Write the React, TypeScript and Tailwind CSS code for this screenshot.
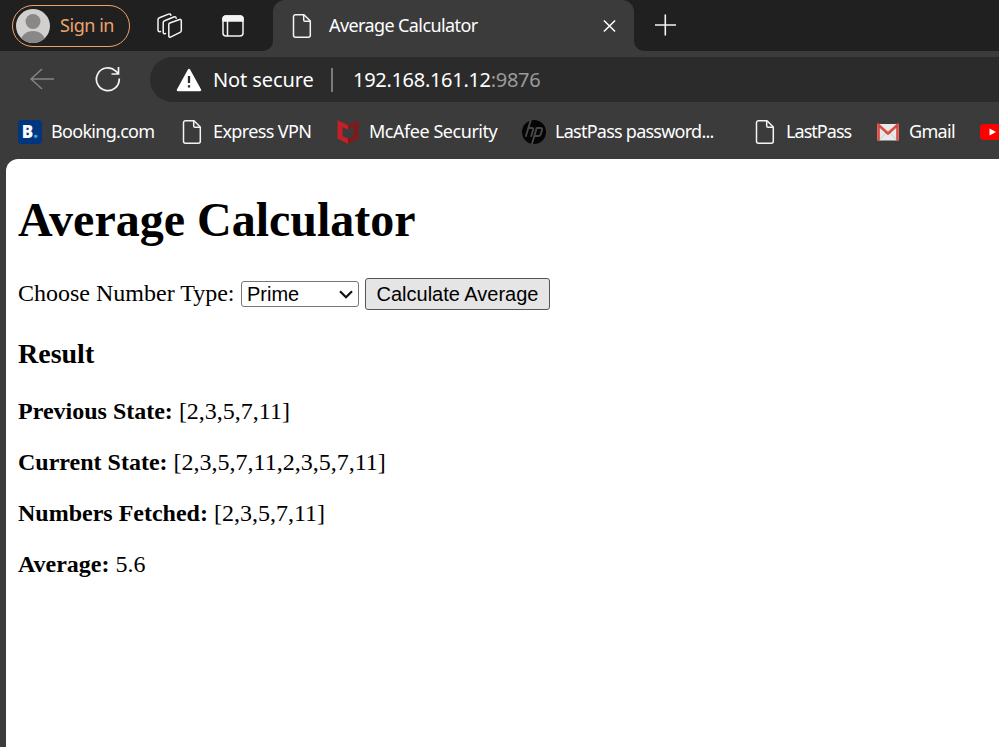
import React from "react";

function PageIcon() {
  return (
    <svg className="block shrink-0" width="20" height="26" viewBox="0 0 20 26" fill="none" stroke="#f4f4f4" strokeWidth="1.5" strokeLinejoin="round">
      <path d="M3.5 1.7H12L18.3 8V22.2a2 2 0 0 1-2 2H3.5a2 2 0 0 1-2-2V3.7a2 2 0 0 1 2-2Z" />
      <path d="M11.7 2V7a1.3 1.3 0 0 0 1.3 1.3h5" />
    </svg>
  );
}

function SignIn() {
  return (
    <div className="ml-[12px] flex h-[42px] w-[118px] shrink-0 items-center rounded-full border-[1.5px] border-[#f0a368] pl-[3px]">
      <svg className="block shrink-0" width="34" height="34" viewBox="0 0 34 34">
        <defs>
          <clipPath id="avatar"><circle cx="17" cy="17" r="17" /></clipPath>
        </defs>
        <g clipPath="url(#avatar)">
          <rect width="34" height="34" fill="#d2d0ce" />
          <circle cx="17" cy="12.5" r="7.5" fill="#8a8886" />
          <ellipse cx="17" cy="33" rx="12.5" ry="11" fill="#8a8886" />
        </g>
      </svg>
      <span className="ml-[10px] whitespace-nowrap text-[18px] tracking-[-0.45px] text-[#eda46c]">Sign in</span>
    </div>
  );
}

function TabStrip() {
  return (
    <div className="flex h-[51px] bg-[#3b3b3b]">
      <div className="flex w-[273px] shrink-0 items-center rounded-br-[10px] bg-[#202020]">
        <SignIn />
        <svg className="ml-[27px] block shrink-0" width="26" height="26" viewBox="0 0 26 26" fill="none" stroke="#f4f4f4" strokeWidth="1.5" strokeLinejoin="round" strokeLinecap="round">
          <path d="M12.800 10 22.600 6.500a1.200 1.200 0 0 1 1.700 1.100V17.600a2 2 0 0 1-1.200 1.800l-9.600 4.700a1.200 1.200 0 0 1-1.700-1.100V11.500a1.600 1.600 0 0 1 1-1.500Z" />
          <path d="M8.500 20.500c-1.500.6-2.300.1-2.300-1.200V9.700c0-1 .5-1.700 1.400-2L16.800 4c1.300-.5 2.200-.1 2.400 1.200" />
          <path d="M3.500 18.600C1.900 19 1 18.400 1 17V6.800c0-1 .5-1.700 1.400-2L11.500 1.100c1.300-.5 2.200-.1 2.400 1.200" />
        </svg>
        <svg className="ml-[38.5px] block shrink-0" width="22" height="22" viewBox="0 0 22 22" fill="none" stroke="#f4f4f4" strokeWidth="1.5">
          <rect x="1" y="1" width="20" height="20" rx="3" />
          <path d="M1 6V4a3 3 0 0 1 3-3h14a3 3 0 0 1 3 3v2Z" fill="#f4f4f4" />
          <path d="M5.500 6v15" />
        </svg>
      </div>
      <div className="w-[361px] shrink-0 bg-[#202020]">
        <div className="flex h-[51px] items-center rounded-t-[12px] bg-[#3b3b3b] pl-[19px]">
          <PageIcon />
          <span className="ml-[17px] w-[274px] whitespace-nowrap text-[18px] tracking-[-0.6px] text-white">Average Calculator</span>
          <svg className="block shrink-0" width="13" height="14" viewBox="0 0 14 14" stroke="#fff" strokeWidth="1.600">
            <path d="M1 1 13 13M13 1 1 13" />
          </svg>
        </div>
      </div>
      <div className="flex grow items-center rounded-bl-[10px] bg-[#202020] pb-[2px] pl-[20px]">
        <svg className="block shrink-0" width="24" height="24" viewBox="0 0 24 24" stroke="#f4f4f4" strokeWidth="1.600">
          <path d="M1 12h21M11.300 1.500v21" />
        </svg>
      </div>
    </div>
  );
}

function Toolbar() {
  return (
    <div className="flex h-[57px] items-center bg-[#3b3b3b]">
      <svg className="mb-[2px] ml-[29px] block shrink-0" width="26" height="24" viewBox="0 0 26 24" fill="none" stroke="#858585" strokeWidth="1.400">
        <path d="M13 2 2 12l11 10M2 12h23" />
      </svg>
      <svg className="mb-[1px] ml-[40px] block shrink-0" width="26" height="26" viewBox="0 0 26 26" fill="none" stroke="#f4f4f4" strokeWidth="1.700">
        <path d="M24.200 12.500A11.400 11.400 0 1 1 20.500 4.800L23.300 7.500M23.500 1v7h-7" />
      </svg>
      <div className="ml-[29px] flex h-[45px] grow items-center rounded-l-full bg-[#2b2b2b] pl-[26px] text-[20px]">
        <svg className="block shrink-0" width="26" height="24" viewBox="0 0 26 24">
          <path d="M13 2 24 22H2Z" fill="#fff" stroke="#fff" strokeWidth="2.500" strokeLinejoin="round" />
          <path d="M13 8v7M13 17.200v2.300" stroke="#2b2b2b" strokeWidth="2.300" />
        </svg>
        <span className="ml-[11px] w-[118px] whitespace-nowrap tracking-[-0.1px] text-white">Not secure</span>
        <div className="h-[24px] w-[2px] shrink-0 bg-[#7c7c7c]" />
        <span className="ml-[20px] whitespace-nowrap tracking-[-0.3px] text-[#9a9a9a]"><span className="text-white">192.168.161.12</span>:9876</span>
      </div>
    </div>
  );
}

function BookmarkBar() {
  return (
    <div className="flex h-[51px] items-center overflow-hidden whitespace-nowrap bg-[#3b3b3b] pb-[4px] text-[18px] text-white">
      <div className="ml-[18px] flex w-[164px] shrink-0 items-center gap-[9px]">
        <span className="flex h-[24px] w-[24px] shrink-0 items-center justify-center rounded-[4px] bg-[#003580] font-['Open_Sans'] text-[17px] font-extrabold leading-none">B<span className="text-[#35a3e8]">.</span></span>
        <span className="tracking-[-0.7px]">Booking.com</span>
      </div>
      <div className="flex w-[154px] shrink-0 items-center gap-[11px]"><PageIcon /><span className="tracking-[-0.62px]">Express VPN</span></div>
      <div className="flex w-[186px] shrink-0 items-center gap-[9px]">
        <svg className="block shrink-0" width="24" height="24" viewBox="0 0 24 24">
          <path d="M1.500 0 12 5.300v4.400L6.500 7v9l5.500 2.800V24L1.500 18.500Z" fill="#c4202a" />
          <path d="M22.500 0 12 5.300v4.400L17.500 7v9L12 18.800V24l10.500-5.500Z" fill="#7c1b1a" />
        </svg>
        <span className="tracking-[-0.46px]">McAfee Security</span>
      </div>
      <div className="flex w-[233px] shrink-0 items-center gap-[9px]">
        <svg className="block shrink-0" width="24" height="24" viewBox="0 0 24 24" fill="none" stroke="#484848" strokeWidth="1.900">
          <circle cx="12" cy="12" r="12" fill="#050505" stroke="none" />
          <path d="M8.800 0 3.700 16.800M6.700 8h3q2 0 1.400 2L9 16.800M14.800 7.500 10 24M14.600 8h4q2 0 1.400 2l-1.400 4.500q-.5 1.500-2.400 1.500h-3.500" />
        </svg>
        <span className="tracking-[-0.75px]">LastPass password...</span>
      </div>
      <div className="flex w-[121px] shrink-0 items-center gap-[11px]"><PageIcon /><span className="tracking-[-0.95px]">LastPass</span></div>
      <div className="flex w-[104px] shrink-0 items-center gap-[9px]">
        <svg className="block shrink-0" width="24" height="18" viewBox="0 0 24 18">
          <rect x="1" y="1" width="22" height="16.500" rx="1.500" fill="#e8e8e8" />
          <path d="m3 17 7-7M21 17l-7-7" stroke="#ccc" />
          <path d="M2.500 17.500V2L12 10.500 21.500 2v15.500" fill="none" stroke="#d94a42" strokeWidth="2.600" />
        </svg>
        <span className="tracking-[-0.7px]">Gmail</span>
      </div>
      <svg className="block shrink-0" width="24" height="18" viewBox="0 0 24 18">
        <rect y="1" width="24" height="16" rx="4" fill="#f00" /><path d="m9.500 5.500 6.500 3.500-6.500 3.500Z" fill="#fff" />
      </svg>
    </div>
  );
}

function State({ label, value }: { label: string; value: string }) {
  return <p className="mb-[24px] leading-[27px]"><b>{label}</b> {value}</p>;
}

export default function App() {
  return (
    <div className="h-[747px] w-[999px] overflow-hidden bg-[#3b3b3b] font-['Noto_Sans',sans-serif]">
      <TabStrip />
      <Toolbar />
      <BookmarkBar />
      <main className="ml-[6px] h-[588px] rounded-tl-[12px] bg-white pl-[12px] pt-[33px] font-['Liberation_Serif',serif] text-[24px] text-black">
        <h1 className="text-[48px] font-bold leading-[55px]">Average Calculator</h1>
        <div className="mt-[31px] flex h-[32px] items-center leading-[27px]">
          <label className="w-[223px] shrink-0 whitespace-nowrap pb-[2px]">Choose Number Type:</label>
          <div className="flex h-[26px] w-[118px] shrink-0 items-center justify-between rounded-[3px] border border-[#767676] bg-white pl-[5px] pr-[5px] font-['Liberation_Sans',sans-serif] text-[20px]">
            <span>Prime</span>
            <svg width="14" height="9" viewBox="0 0 14 9" fill="none" stroke="#111" strokeWidth="2.200"><path d="m1 1.200 6 6 6-6" /></svg>
          </div>
          <button className="ml-[6px] h-[32px] w-[185px] shrink-0 whitespace-nowrap rounded-[3px] border border-[#555] bg-[#e5e5e5] font-['Liberation_Sans',sans-serif] text-[20px] leading-none">Calculate Average</button>
        </div>
        <h3 className="mb-[28px] mt-[28px] text-[28px] font-bold leading-[32px]">Result</h3>
        <State label="Previous State:" value="[2,3,5,7,11]" />
        <State label="Current State:" value="[2,3,5,7,11,2,3,5,7,11]" />
        <State label="Numbers Fetched:" value="[2,3,5,7,11]" />
        <State label="Average:" value="5.6" />
      </main>
    </div>
  );
}
